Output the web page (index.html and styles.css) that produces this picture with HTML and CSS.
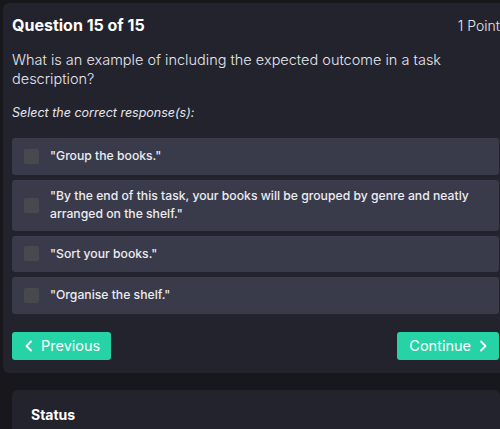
FILE: index.html
```html
<!DOCTYPE html>
<html lang="en">
<head>
    <meta charset="UTF-8">
    <meta name="viewport" content="width=device-width, initial-scale=1.0">
    <title>Question 15 of 15</title>
    <link rel="stylesheet" href="styles.css">
</head>
<body>

    <div class="card quiz">
        <div class="quiz-head">
            <h2>Question 15 of 15</h2>
            <span class="points">1 Point</span>
        </div>

        <p class="question">What is an example of including the expected outcome in a task description?</p>
        <p class="hint">Select the correct response(s):</p>

        <ul class="options">
            <li class="option"><span class="check"></span><span>"Group the books."</span></li>
            <li class="option"><span class="check"></span><span>"By the end of this task, your books will be grouped by genre and neatly arranged on the shelf."</span></li>
            <li class="option"><span class="check"></span><span>"Sort your books."</span></li>
            <li class="option"><span class="check"></span><span>"Organise the shelf."</span></li>
        </ul>

        <div class="nav">
            <button class="btn">
                <svg width="10" height="12" viewBox="0 0 10 12"><path d="M7 1.5 2.5 6 7 10.5" fill="none" stroke="currentColor" stroke-width="1.8" stroke-linecap="round" stroke-linejoin="round"/></svg>
                Previous
            </button>
            <button class="btn">
                Continue
                <svg width="10" height="12" viewBox="0 0 10 12"><path d="M3 1.5 7.5 6 3 10.5" fill="none" stroke="currentColor" stroke-width="1.8" stroke-linecap="round" stroke-linejoin="round"/></svg>
            </button>
        </div>
    </div>

    <div class="card status">
        <h3>Status</h3>
    </div>

</body>
</html>
```

FILE: styles.css
```css
body {
    margin: 0;
    padding: 3px 0 0 3px;
    background-color: #17171c;
    font-family: Inter, "Noto Sans", sans-serif;
    color: #e6e6ec;
    overflow: hidden;
}
.card {
    background-color: #23232e;
    border-radius: 6px;
}
.quiz {
    width: 505px;
    padding: 12px 0 13px 9px;
    box-sizing: border-box;
}
.quiz-head {
    display: flex;
    justify-content: space-between;
    align-items: baseline;
    padding-right: 8px;
}
.quiz-head h2 {
    margin: 0;
    font-size: 16px;
    font-weight: 700;
    color: #ffffff;
}
.points {
    font-size: 14px;
    font-weight: 300;
    color: #e6e6ec;
}
.question {
    margin: 15px 0 0;
    font-size: 14.5px;
    line-height: 19px;
    font-weight: 300;
    padding-right: 50px;
}
.hint {
    margin: 17px 0 0;
    font-size: 12.5px;
    font-style: italic;
    font-weight: 400;
}
.options {
    list-style: none;
    margin: 18px 0 0;
    padding: 0;
    width: 487px;
    display: flex;
    flex-direction: column;
    gap: 5px;
}
.option {
    display: flex;
    align-items: center;
    gap: 11px;
    min-height: 36.5px;
    padding: 7.5px 18px 7.5px 12px;
    box-sizing: border-box;
    background-color: #3a3b4a;
    border-radius: 3px;
    box-shadow: inset 0 1px 0 #44455433;
    font-size: 12.2px;
    font-weight: 500;
    line-height: 18px;
    color: #ececf2;
}
.check {
    flex: none;
    width: 15px;
    height: 15px;
    background-color: #48484f;
    border-radius: 2px;
}
.nav {
    display: flex;
    justify-content: space-between;
    margin-top: 18px;
    width: 487px;
}
.btn {
    display: flex;
    align-items: center;
    gap: 7px;
    height: 28px;
    padding: 0 11px 0 12px;
    background-color: #26d3a6;
    border: none;
    border-radius: 3px;
    color: #ffffff;
    font-family: inherit;
    font-size: 14.5px;
    font-weight: 400;
    cursor: pointer;
}
.status {
    margin: 17px 0 0 9px;
    height: 60px;
    padding: 16px 19px;
}
.status h3 {
    margin: 0;
    font-size: 14px;
    font-weight: 700;
    color: #ffffff;
}
```
